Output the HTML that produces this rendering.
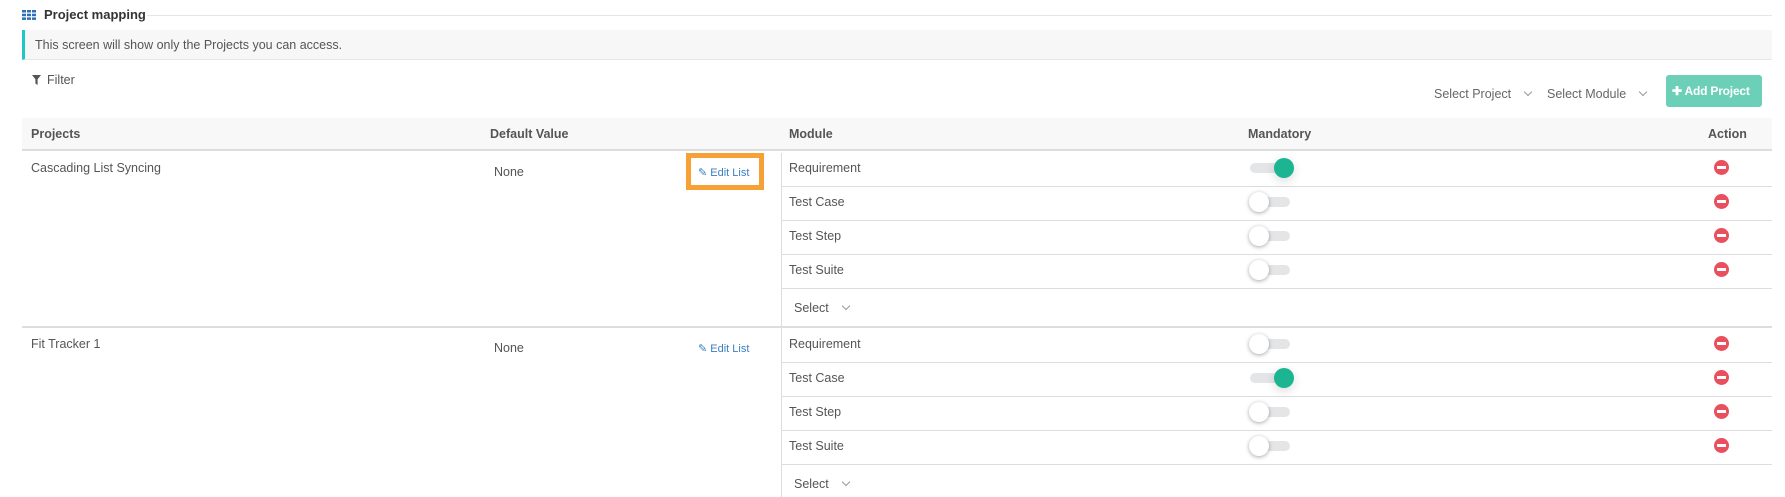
<!DOCTYPE html>
<html><head><meta charset="utf-8"><style>
*{margin:0;padding:0;box-sizing:border-box}
body{width:1785px;height:497px;overflow:hidden;background:#fff;font-family:"Liberation Sans",sans-serif;font-size:12.5px;color:#555;position:relative}
.a{position:absolute;white-space:nowrap}
.hl{position:absolute;height:1px;background:#ddd}
.tog{position:absolute;width:40px;height:10px;border-radius:5px;background:#e4e5e7}
.kn{position:absolute;top:-5px;width:20px;height:20px;border-radius:50%}
.off .kn{left:-1px;background:#fff;box-shadow:0 1px 4px rgba(0,0,0,.35)}
.on .kn{left:24px;background:#1bb591;box-shadow:0 3px 10px rgba(0,0,0,.15)}
.rm{position:absolute;width:15px;height:15px;border-radius:50%;background:#ea4f5e}
.rm:after{content:"";position:absolute;left:3px;top:6px;width:9px;height:3px;background:#fff}
.chev{display:inline-block;width:6px;height:6px;border-right:1px solid #999;border-bottom:1px solid #999;transform:rotate(45deg);margin-left:14px;position:relative;top:-3px}
.edit{color:#3a7fc1;font-size:11px}
</style></head><body>
<svg class="a" style="left:22px;top:10px" width="14" height="10"><g fill="#2f6fb8"><rect x="0" y="0" width="4" height="2.5"/><rect x="5" y="0" width="4" height="2.5"/><rect x="10" y="0" width="4" height="2.5"/><rect x="0" y="3.7" width="4" height="2.5"/><rect x="5" y="3.7" width="4" height="2.5"/><rect x="10" y="3.7" width="4" height="2.5"/><rect x="0" y="7.4" width="4" height="2.5"/><rect x="5" y="7.4" width="4" height="2.5"/><rect x="10" y="7.4" width="4" height="2.5"/></g></svg>
<div class="a" style="left:44px;top:7px;font-size:13px;color:#333;font-weight:600">Project mapping</div>
<div class="hl" style="left:147px;top:15px;width:1625px;background:#e6e6e6"></div>
<div class="a" style="left:22px;top:30px;width:1750px;height:30px;background:#f7f7f7;border-left:3px solid #1fc8c8;border-bottom:1px solid #e6e6e6"></div>
<div class="a" style="left:35px;top:38px;font-size:12.5px;color:#555">This screen will show only the Projects you can access.</div>
<svg class="a" style="left:32px;top:75px" width="9" height="10"><path d="M0 0H9L5.6 4.2V10L3.4 8.5V4.2Z" fill="#555"/></svg>
<div class="a" style="left:47px;top:73px">Filter</div>
<div class="a" style="left:1434px;top:87px;color:#666">Select Project<span class="chev"></span></div>
<div class="a" style="left:1547px;top:87px;color:#666">Select Module<span class="chev"></span></div>
<div class="a" style="left:1666px;top:75px;width:96px;height:32px;background:#6ccfb8;border-radius:3px;color:#fff;font-weight:bold;font-size:12px;letter-spacing:-0.2px;line-height:32px;padding-left:6px;overflow:hidden">&#10010; Add Project</div>
<div class="a" style="left:22px;top:118px;width:1750px;height:33px;background:#f8f8f8;border-bottom:2px solid #ddd"></div>
<div class="a" style="left:31px;top:127px;font-weight:bold">Projects</div>
<div class="a" style="left:490px;top:127px;font-weight:bold">Default Value</div>
<div class="a" style="left:789px;top:127px;font-weight:bold">Module</div>
<div class="a" style="left:1248px;top:127px;font-weight:bold">Mandatory</div>
<div class="a" style="left:1708px;top:127px;font-weight:bold">Action</div>
<div class="a" style="left:781px;top:153px;width:1px;height:344px;background:#ddd"></div>
<div class="a" style="left:31px;top:161px">Cascading List Syncing</div>
<div class="a" style="left:494px;top:165px">None</div>
<div class="a" style="left:686px;top:153px;width:78px;height:37px;border:5px solid #f7a035"></div>
<div class="a edit" style="left:698px;top:166px">&#9998; Edit List</div>
<div class="a" style="left:789px;top:161px">Requirement</div>
<div class="a" style="left:789px;top:195px">Test Case</div>
<div class="a" style="left:789px;top:229px">Test Step</div>
<div class="a" style="left:789px;top:263px">Test Suite</div>
<div class="a" style="left:794px;top:301px">Select<span class="chev"></span></div>
<div class="hl" style="left:782px;top:186px;width:990px"></div>
<div class="hl" style="left:782px;top:220px;width:990px"></div>
<div class="hl" style="left:782px;top:254px;width:990px"></div>
<div class="hl" style="left:782px;top:288px;width:990px"></div>
<div class="tog on" style="left:1250px;top:163px"><div class="kn"></div></div>
<div class="tog off" style="left:1250px;top:197px"><div class="kn"></div></div>
<div class="tog off" style="left:1250px;top:231px"><div class="kn"></div></div>
<div class="tog off" style="left:1250px;top:265px"><div class="kn"></div></div>
<div class="rm" style="left:1714px;top:160px"></div>
<div class="rm" style="left:1714px;top:194px"></div>
<div class="rm" style="left:1714px;top:228px"></div>
<div class="rm" style="left:1714px;top:262px"></div>
<div class="a" style="left:22px;top:326px;width:1750px;height:2px;background:#ddd"></div>
<div class="a" style="left:31px;top:337px">Fit Tracker 1</div>
<div class="a" style="left:494px;top:341px">None</div>
<div class="a edit" style="left:698px;top:342px">&#9998; Edit List</div>
<div class="a" style="left:789px;top:337px">Requirement</div>
<div class="a" style="left:789px;top:371px">Test Case</div>
<div class="a" style="left:789px;top:405px">Test Step</div>
<div class="a" style="left:789px;top:439px">Test Suite</div>
<div class="a" style="left:794px;top:477px">Select<span class="chev"></span></div>
<div class="hl" style="left:782px;top:362px;width:990px"></div>
<div class="hl" style="left:782px;top:396px;width:990px"></div>
<div class="hl" style="left:782px;top:430px;width:990px"></div>
<div class="hl" style="left:782px;top:464px;width:990px"></div>
<div class="tog off" style="left:1250px;top:339px"><div class="kn"></div></div>
<div class="tog on" style="left:1250px;top:373px"><div class="kn"></div></div>
<div class="tog off" style="left:1250px;top:407px"><div class="kn"></div></div>
<div class="tog off" style="left:1250px;top:441px"><div class="kn"></div></div>
<div class="rm" style="left:1714px;top:336px"></div>
<div class="rm" style="left:1714px;top:370px"></div>
<div class="rm" style="left:1714px;top:404px"></div>
<div class="rm" style="left:1714px;top:438px"></div>
</body></html>
